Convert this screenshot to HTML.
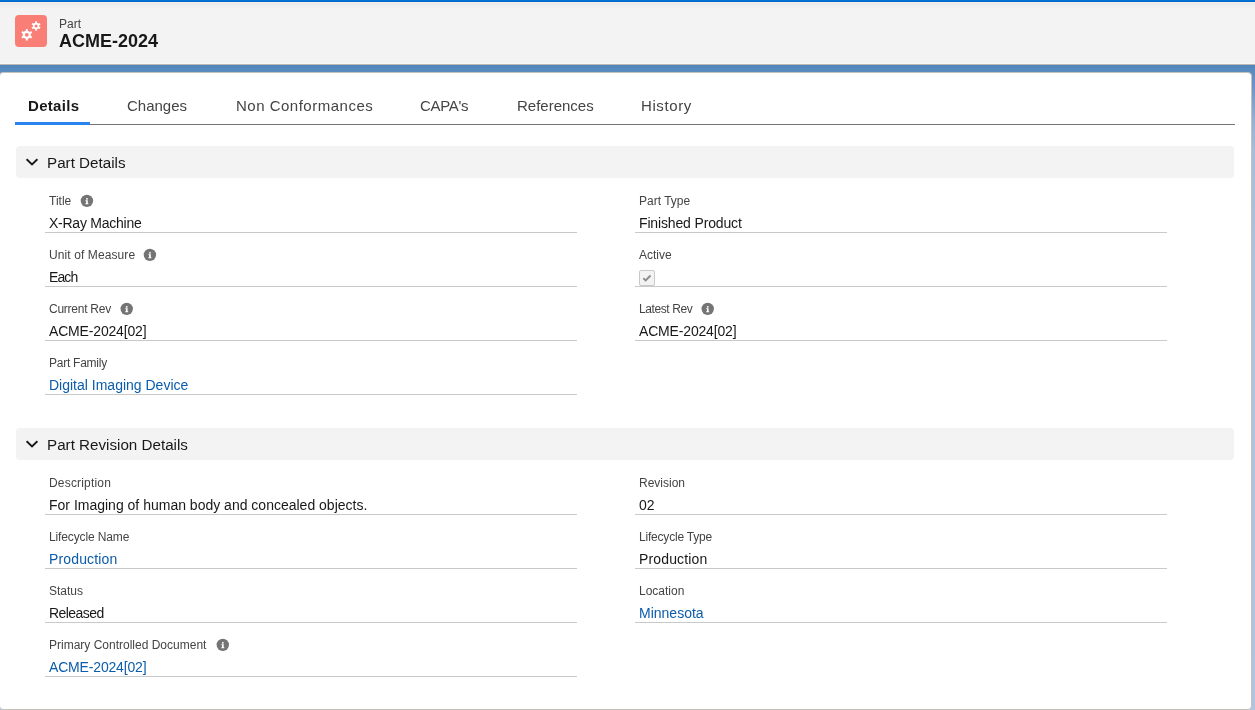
<!DOCTYPE html>
<html><head><meta charset="utf-8">
<style>
*{box-sizing:border-box;margin:0;padding:0}
html,body{width:1255px;height:710px;overflow:hidden}
body{position:relative;font-family:"Liberation Sans",sans-serif;background:#5b8dc1;color:#181818}
.abs{position:absolute}
#topline{left:0;top:0;width:1255px;height:2px;background:linear-gradient(#0072d4 0,#0072d4 1px,#0066cc 1px)}
#hdr{left:0;top:2px;width:1255px;height:62px;background:linear-gradient(#f6f0ea 0,#f6f0ea 1px,#e9e9e9 1px,#f3f3f3 6px);border-bottom:1px solid #f8f8f8}
#hdrsh{left:0;top:64px;width:1255px;height:1px;background:#bcb8b4}
#bg{left:0;top:64px;width:1255px;height:646px;background:linear-gradient(#5185ba 0px,#5a8cbf 8px,#7098c8 26px,#93b0d5 56px,#a5bddb 86px,#adc2de 200px,#b0c4df 646px)}
#icon{left:15px;top:15px;width:32px;height:32px;border-radius:4px;background:#f87e76}
#icon svg{position:absolute;left:0;top:0}
#objname{left:59px;top:16px;font-size:12px;color:#444;line-height:16px}
#recname{left:59px;top:30px;font-size:18px;font-weight:bold;color:#181818;line-height:22px}
#card{left:-1px;top:72px;width:1253px;height:638px;background:#fff;border-radius:4px;border:1px solid #c4c0bc}
.tab{position:absolute;top:96px;font-size:15px;color:#444;line-height:20px;white-space:nowrap}
#tabline{left:15px;top:124px;width:1220px;height:1px;background:#747474}
#tabact{left:15px;top:122px;width:75px;height:3px;background:#2a84ef}
.sec{position:absolute;left:16px;width:1218px;height:32px;background:#f3f3f3;border-radius:4px}
.sec svg{position:absolute;left:10px;top:12px}
.sec span{position:absolute;left:31px;top:8px;font-size:15.2px;color:#181818;line-height:18px;white-space:nowrap}
.lbl{position:absolute;font-size:12px;color:#444;line-height:14px;white-space:nowrap}
.val{position:absolute;font-size:14px;color:#181818;line-height:16px;white-space:nowrap}
.val.lnk{color:#0b5cab}
.ul{position:absolute;width:532px;height:1px;background:#c9c9c9}
.info{position:absolute;width:16px;height:16px}
.info svg{display:block}
.chk{position:absolute;width:16px;height:16px;border:1px solid #c9c9c9;border-radius:2px;background:#f3f3f3}
.chk svg{position:absolute;left:-1px;top:-1px}
.lbl,.val,.tab,.sec span,#objname,#recname{will-change:transform}

</style></head><body>
<div id="bg" class="abs"></div>
<div id="hdr" class="abs"></div>
<div id="hdrsh" class="abs"></div>
<div id="topline" class="abs"></div>
<div id="icon" class="abs"><svg width="32" height="32" viewBox="0 0 32 32"><circle cx="11.8" cy="19.8" r="3.0" fill="none" stroke="#fff" stroke-width="2.2"/><line x1="11.80" y1="16.80" x2="11.80" y2="14.10" stroke="#fff" stroke-width="2.0"/><line x1="9.20" y1="18.30" x2="6.86" y2="16.95" stroke="#fff" stroke-width="2.0"/><line x1="9.20" y1="21.30" x2="6.86" y2="22.65" stroke="#fff" stroke-width="2.0"/><line x1="11.80" y1="22.80" x2="11.80" y2="25.50" stroke="#fff" stroke-width="2.0"/><line x1="14.40" y1="21.30" x2="16.74" y2="22.65" stroke="#fff" stroke-width="2.0"/><line x1="14.40" y1="18.30" x2="16.74" y2="16.95" stroke="#fff" stroke-width="2.0"/><circle cx="21.1" cy="11.0" r="2.4" fill="none" stroke="#fff" stroke-width="1.7"/><line x1="21.10" y1="8.60" x2="21.10" y2="6.30" stroke="#fff" stroke-width="1.7"/><line x1="19.02" y1="9.80" x2="17.03" y2="8.65" stroke="#fff" stroke-width="1.7"/><line x1="19.02" y1="12.20" x2="17.03" y2="13.35" stroke="#fff" stroke-width="1.7"/><line x1="21.10" y1="13.40" x2="21.10" y2="15.70" stroke="#fff" stroke-width="1.7"/><line x1="23.18" y1="12.20" x2="25.17" y2="13.35" stroke="#fff" stroke-width="1.7"/><line x1="23.18" y1="9.80" x2="25.17" y2="8.65" stroke="#fff" stroke-width="1.7"/></svg></div>
<div id="objname" class="abs">Part</div>
<div id="recname" class="abs">ACME-2024</div>
<div id="card" class="abs"></div>
<div class="tab" style="left:28px;font-weight:bold;color:#181818;letter-spacing:0.3px">Details</div>
<div class="tab" style="left:127px">Changes</div>
<div class="tab" style="left:236px;letter-spacing:0.5px">Non Conformances</div>
<div class="tab" style="left:420px;letter-spacing:-0.3px">CAPA's</div>
<div class="tab" style="left:517px">References</div>
<div class="tab" style="left:641px;letter-spacing:0.6px">History</div>
<div id="tabline" class="abs"></div>
<div id="tabact" class="abs"></div>
<div class="sec" style="top:146px"><svg width="12" height="8" viewBox="0 0 12 8"><path d="M0.6 1.2 L6 6.4 L11.4 1.2" fill="none" stroke="#181818" stroke-width="1.9"/></svg><span>Part Details</span></div>
<div class="sec" style="top:428px"><svg width="12" height="8" viewBox="0 0 12 8"><path d="M0.6 1.2 L6 6.4 L11.4 1.2" fill="none" stroke="#181818" stroke-width="1.9"/></svg><span>Part Revision Details</span></div>
<div class="lbl" style="left:49px;top:194px">Title</div>
<div class="info" style="left:79px;top:193px"><svg width="16" height="16" viewBox="0 0 16 16"><circle cx="7.90" cy="7.85" r="6.2" fill="#747474"/><rect x="7.10" y="5.15" width="1.7" height="1.5" fill="#fff"/><path d="M6.40 7.25 L8.80 7.25 L8.80 10.15 L9.40 10.15 L9.40 11.15 L6.40 11.15 L6.40 10.15 L7.10 10.15 L7.10 8.05 L6.40 8.05 Z" fill="#fff"/></svg></div>
<div class="val" style="left:49px;top:215px;letter-spacing:-0.25px">X-Ray Machine</div>
<div class="ul" style="left:45px;top:232px"></div>
<div class="lbl" style="left:49px;top:248px;letter-spacing:0.1px">Unit of Measure</div>
<div class="info" style="left:142px;top:247px"><svg width="16" height="16" viewBox="0 0 16 16"><circle cx="7.90" cy="7.85" r="6.2" fill="#747474"/><rect x="7.10" y="5.15" width="1.7" height="1.5" fill="#fff"/><path d="M6.40 7.25 L8.80 7.25 L8.80 10.15 L9.40 10.15 L9.40 11.15 L6.40 11.15 L6.40 10.15 L7.10 10.15 L7.10 8.05 L6.40 8.05 Z" fill="#fff"/></svg></div>
<div class="val" style="left:49px;top:269px;letter-spacing:-0.9px">Each</div>
<div class="ul" style="left:45px;top:286px"></div>
<div class="lbl" style="left:49px;top:302px;letter-spacing:-0.25px">Current Rev</div>
<div class="info" style="left:118px;top:301px"><svg width="16" height="16" viewBox="0 0 16 16"><circle cx="8.70" cy="7.85" r="6.2" fill="#747474"/><rect x="7.90" y="5.15" width="1.7" height="1.5" fill="#fff"/><path d="M7.20 7.25 L9.60 7.25 L9.60 10.15 L10.20 10.15 L10.20 11.15 L7.20 11.15 L7.20 10.15 L7.90 10.15 L7.90 8.05 L7.20 8.05 Z" fill="#fff"/></svg></div>
<div class="val" style="left:49px;top:323px;letter-spacing:-0.17px">ACME-2024[02]</div>
<div class="ul" style="left:45px;top:340px"></div>
<div class="lbl" style="left:49px;top:356px;letter-spacing:-0.25px">Part Family</div>
<div class="val lnk" style="left:49px;top:377px">Digital Imaging Device</div>
<div class="ul" style="left:45px;top:394px"></div>
<div class="lbl" style="left:639px;top:194px">Part Type</div>
<div class="val" style="left:639px;top:215px;letter-spacing:-0.15px">Finished Product</div>
<div class="ul" style="left:635px;top:232px"></div>
<div class="lbl" style="left:639px;top:248px">Active</div>
<div class="chk" style="left:639px;top:270px"><svg width="16" height="16" viewBox="0 0 16 16"><path d="M4.3 8.2 L6.7 10.5 L11.5 5.5" fill="none" stroke="#8c8c8c" stroke-width="1.9"/></svg></div>
<div class="ul" style="left:635px;top:286px"></div>
<div class="lbl" style="left:639px;top:302px;letter-spacing:-0.4px">Latest Rev</div>
<div class="info" style="left:699px;top:301px"><svg width="16" height="16" viewBox="0 0 16 16"><circle cx="8.70" cy="7.85" r="6.2" fill="#747474"/><rect x="7.90" y="5.15" width="1.7" height="1.5" fill="#fff"/><path d="M7.20 7.25 L9.60 7.25 L9.60 10.15 L10.20 10.15 L10.20 11.15 L7.20 11.15 L7.20 10.15 L7.90 10.15 L7.90 8.05 L7.20 8.05 Z" fill="#fff"/></svg></div>
<div class="val" style="left:639px;top:323px;letter-spacing:-0.17px">ACME-2024[02]</div>
<div class="ul" style="left:635px;top:340px"></div>
<div class="lbl" style="left:49px;top:476px;letter-spacing:0.18px">Description</div>
<div class="val" style="left:49px;top:497px">For Imaging of human body and concealed objects.</div>
<div class="ul" style="left:45px;top:514px"></div>
<div class="lbl" style="left:49px;top:530px;letter-spacing:-0.13px">Lifecycle Name</div>
<div class="val lnk" style="left:49px;top:551px;letter-spacing:0.15px">Production</div>
<div class="ul" style="left:45px;top:568px"></div>
<div class="lbl" style="left:49px;top:584px">Status</div>
<div class="val" style="left:49px;top:605px;letter-spacing:-0.55px">Released</div>
<div class="ul" style="left:45px;top:622px"></div>
<div class="lbl" style="left:49px;top:638px">Primary Controlled Document</div>
<div class="info" style="left:214px;top:637px"><svg width="16" height="16" viewBox="0 0 16 16"><circle cx="8.80" cy="7.85" r="6.2" fill="#747474"/><rect x="8.00" y="5.15" width="1.7" height="1.5" fill="#fff"/><path d="M7.30 7.25 L9.70 7.25 L9.70 10.15 L10.30 10.15 L10.30 11.15 L7.30 11.15 L7.30 10.15 L8.00 10.15 L8.00 8.05 L7.30 8.05 Z" fill="#fff"/></svg></div>
<div class="val lnk" style="left:49px;top:659px;letter-spacing:-0.17px">ACME-2024[02]</div>
<div class="ul" style="left:45px;top:676px"></div>
<div class="lbl" style="left:639px;top:476px">Revision</div>
<div class="val" style="left:639px;top:497px">02</div>
<div class="ul" style="left:635px;top:514px"></div>
<div class="lbl" style="left:639px;top:530px;letter-spacing:-0.2px">Lifecycle Type</div>
<div class="val" style="left:639px;top:551px;letter-spacing:0.15px">Production</div>
<div class="ul" style="left:635px;top:568px"></div>
<div class="lbl" style="left:639px;top:584px">Location</div>
<div class="val lnk" style="left:639px;top:605px">Minnesota</div>
<div class="ul" style="left:635px;top:622px"></div>
</body></html>
